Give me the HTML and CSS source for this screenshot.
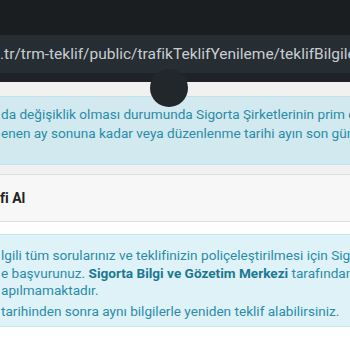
FILE: index.html
```html
<!DOCTYPE html>
<html lang="tr">
<head>
<meta charset="utf-8">
<title>Teklif Bilgileri</title>
<link rel="stylesheet" href="styles.css">
</head>
<body>
<div class="screen">
  <div class="statusbar"></div>
  <div class="urlbar"><span class="url">.tr/trm-teklif/public/trafikTeklifYenileme/teklifBilgileri</span></div>
  <div class="toolbar-edge"></div>
  <div class="camera"></div>
  <main class="page">
    <div class="alert alert-top">
      <span class="line">da değişiklik olması durumunda Sigorta Şirketlerinin prim değişikliği</span>
      <span class="line">enen ay sonuna kadar veya düzenlenme tarihi ayın son gününe kadar</span>
    </div>
    <section class="card">
      <header class="card-header">fi Al</header>
      <div class="card-body">
        <div class="alert alert-body">
          <p class="para">
            <span class="line">lgili tüm sorularınız ve teklifinizin poliçeleştirilmesi için Sigorta</span>
            <span class="line">e başvurunuz. <b>Sigorta Bilgi ve Gözetim Merkezi</b> tarafından</span>
            <span class="line">apılmamaktadır.</span>
          </p>
          <p class="para">
            <span class="line">tarihinden sonra aynı bilgilerle yeniden teklif alabilirsiniz.</span>
          </p>
        </div>
      </div>
    </section>
  </main>
</div>
</body>
</html>
```
FILE: styles.css
```css
html, body {
  margin: 0;
  padding: 0;
}
body {
  width: 350px;
  height: 350px;
  overflow: hidden;
  background: #ffffff;
  font-family: Roboto, "Noto Sans", sans-serif;
}
.screen {
  position: relative;
  width: 350px;
  height: 350px;
  overflow: hidden;
}
.statusbar {
  height: 35px;
  background: #1b1e21;
}
.urlbar {
  height: 38px;
  background: #262d33;
  display: flex;
  align-items: center;
  overflow: hidden;
  white-space: nowrap;
}
.url {
  color: #c9cdd1;
  font-size: 15.5px;
}
.toolbar-edge {
  height: 9px;
  background: #1f2327;
}
.camera {
  position: absolute;
  left: 150px;
  top: 69px;
  width: 38px;
  height: 38px;
  border-radius: 50%;
  background: #22272b;
}
.page {
  background: #f1f1f1;
  padding-top: 14px;
}
.alert {
  color: #2a8ca7;
  font-size: 13.6px;
  white-space: nowrap;
  overflow: hidden;
}
.line {
  display: block;
}
.alert-top {
  background: #d2e9ef;
  border-top: 1px solid #c2e2ea;
  border-bottom: 1px solid #c2e2ea;
  padding: 8px 0 10px 1px;
  line-height: 19px;
  height: 49px;
}
.card {
  margin-top: 9px;
  background: #ffffff;
  border-top: 1px solid #dcdcdc;
}
.card-header {
  background: #f7f7f7;
  border-bottom: 1px solid #e0e0e0;
  height: 46px;
  display: flex;
  align-items: center;
  padding-left: 0;
  font-weight: 700;
  font-size: 14px;
  color: #222;
}
.card-body {
  padding-top: 12px;
  height: 140px;
}
.alert-body {
  background: #dff2f8;
  border-top: 1px solid #c6e7f0;
  border-bottom: 1px solid #c6e7f0;
  padding: 12px 0 6px 1px;
  line-height: 17.5px;
}
.alert-body b {
  color: #1b7893;
}
.para {
  margin: 0;
}
.para + .para {
  margin-top: 3px;
}
```
